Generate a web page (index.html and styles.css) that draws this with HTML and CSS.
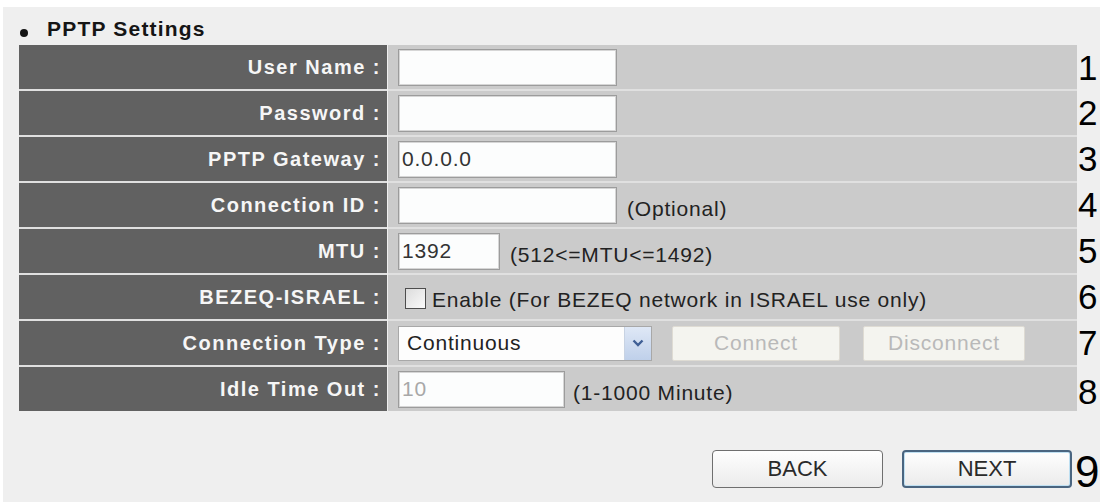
FILE: index.html
```html
<!DOCTYPE html>
<html>
<head>
<meta charset="utf-8">
<title>PPTP Settings</title>
<link rel="stylesheet" href="styles.css">
</head>
<body>
<div class="panel">
  <div class="title"><span class="bullet"></span><span class="title-text">PPTP Settings</span></div>
  <div class="form">
    <div class="row first">
      <div class="label">User Name :</div>
      <div class="value"><input class="field w-long" type="text" value=""></div>
      <div class="num">1</div>
    </div>
    <div class="row">
      <div class="label">Password :</div>
      <div class="value"><input class="field w-long" type="password" value=""></div>
      <div class="num">2</div>
    </div>
    <div class="row">
      <div class="label">PPTP Gateway :</div>
      <div class="value"><input class="field w-long" type="text" value="0.0.0.0"></div>
      <div class="num">3</div>
    </div>
    <div class="row">
      <div class="label">Connection ID :</div>
      <div class="value"><input class="field w-long" type="text" value=""><span class="hint">(Optional)</span></div>
      <div class="num">4</div>
    </div>
    <div class="row">
      <div class="label">MTU :</div>
      <div class="value"><input class="field w-mtu" type="text" value="1392"><span class="hint">(512&lt;=MTU&lt;=1492)</span></div>
      <div class="num">5</div>
    </div>
    <div class="row">
      <div class="label">BEZEQ-ISRAEL :</div>
      <div class="value"><span class="checkbox"></span><span class="check-text">Enable (For BEZEQ network in ISRAEL use only)</span></div>
      <div class="num">6</div>
    </div>
    <div class="row">
      <div class="label">Connection Type :</div>
      <div class="value">
        <div class="select">
          <span class="select-text">Continuous</span>
          <span class="select-arrow"><svg width="12" height="8" viewBox="0 0 12 8"><path d="M1.5 1.5 L6 6 L10.5 1.5" fill="none" stroke="#3f5f95" stroke-width="2.4"/></svg></span>
        </div>
        <button class="btn-disabled w-connect" disabled>Connect</button>
        <button class="btn-disabled w-disconnect" disabled>Disconnect</button>
      </div>
      <div class="num">7</div>
    </div>
    <div class="row">
      <div class="label">Idle Time Out :</div>
      <div class="value"><input class="field w-idle is-disabled" type="text" value="10"><span class="hint hint-idle">(1-1000 Minute)</span></div>
      <div class="num num-low">8</div>
    </div>
  </div>
  <div class="actions">
    <div></div>
    <div class="buttons">
      <button class="btn">BACK</button>
      <button class="btn btn-default">NEXT</button>
    </div>
    <div class="num num-big">9</div>
  </div>
</div>
</body>
</html>
```
FILE: styles.css
```css
body {
  margin: 0;
  background: #ffffff;
  font-family: "Liberation Sans", Arial, sans-serif;
}

.panel {
  margin: 7px 9px 0 3px;
  height: 495px;
  box-sizing: border-box;
  background: #efefef;
  padding: 10px 0 0 16px;
}

.title {
  display: flex;
  align-items: center;
  height: 24px;
  margin-bottom: 4px;
  font-size: 21px;
  font-weight: bold;
  letter-spacing: 1.2px;
  color: #151515;
}

.bullet {
  width: 8px;
  height: 8px;
  border-radius: 50%;
  background: #151515;
  margin: 7px 19px 0 1px;
}

.row {
  display: grid;
  grid-template-columns: 368px 689px 1fr;
  column-gap: 1px;
}

.label,
.value {
  height: 44px;
  border-top: 2px solid #e0e0e0;
}

.row.first .label,
.row.first .value {
  border-top: 0;
}

.label {
  background: #616161;
  color: #f6f6f6;
  font-weight: bold;
  font-size: 20px;
  letter-spacing: 1.5px;
  display: flex;
  align-items: center;
  justify-content: flex-end;
  padding-right: 6px;
}

.value {
  background: #cbcbcb;
  display: flex;
  align-items: center;
  padding-left: 10px;
  font-size: 21px;
  letter-spacing: 0.8px;
  color: #222;
}

.num {
  display: flex;
  align-items: center;
  font-size: 35px;
  color: #000;
  line-height: 1;
}

.num-low {
  align-items: flex-end;
  padding-bottom: 2px;
}

.field {
  height: 37px;
  box-sizing: border-box;
  border: 1px solid #9c9c9c;
  box-shadow: inset 0 0 0 1px #d6d6d6;
  background: #fcfdfd;
  font-family: "Liberation Sans", Arial, sans-serif;
  font-size: 21px;
  letter-spacing: 0.8px;
  color: #333;
  padding: 0 3px;
  margin: 0;
  outline: none;
}

.w-long { width: 219px; }
.w-mtu { width: 102px; }
.w-idle { width: 167px; }

.is-disabled { color: #a8a8a8; }

.hint {
  margin-left: 10px;
  margin-top: 7px;
}

.hint-idle { margin-left: 8px; }

.checkbox {
  width: 21px;
  height: 21px;
  box-sizing: border-box;
  border: 1px solid #4d4d4d;
  background: linear-gradient(135deg, #dcdcdc, #fafafa);
  margin: 2px 0 0 7px;
}

.check-text {
  margin-left: 6px;
  margin-top: 6px;
}

.select {
  width: 254px;
  height: 35px;
  box-sizing: border-box;
  border: 1px solid #a8a8a8;
  background: #fdfdfd;
  display: flex;
}

.select-text {
  flex: 1;
  display: flex;
  align-items: center;
  padding-left: 8px;
}

.select-arrow {
  width: 26px;
  display: flex;
  align-items: center;
  justify-content: center;
  background: linear-gradient(#dfe8f6, #bfd0ea);
  border-left: 1px solid #c8d3e3;
}

.btn-disabled {
  height: 35px;
  box-sizing: border-box;
  border: 1px solid #dedbd3;
  border-radius: 2px;
  background: #f4f4ef;
  color: #b9b9b9;
  font-family: "Liberation Sans", Arial, sans-serif;
  font-size: 21px;
  letter-spacing: 0.8px;
  padding: 0;
}

.w-connect { width: 168px; margin-left: 20px; }
.w-disconnect { width: 162px; margin-left: 23px; }

.actions {
  display: grid;
  grid-template-columns: 368px 689px 1fr;
  column-gap: 1px;
  margin-top: 39px;
  height: 38px;
}

.buttons {
  display: flex;
  justify-content: flex-end;
  gap: 19px;
  padding-right: 5px;
}

.btn {
  width: 171px;
  height: 38px;
  box-sizing: border-box;
  border: 1px solid #6f6f6f;
  border-radius: 4px;
  background: linear-gradient(#fefefe, #ebebeb);
  font-family: "Liberation Sans", Arial, sans-serif;
  font-size: 22px;
  color: #2a2a2a;
  padding: 0;
}

.btn-default {
  width: 170px;
  border: 2px solid #4a6580;
  box-shadow: inset 0 0 0 1px #bfe0f2;
}

.num-big {
  font-size: 44px;
  margin-left: -3px;
}
```
